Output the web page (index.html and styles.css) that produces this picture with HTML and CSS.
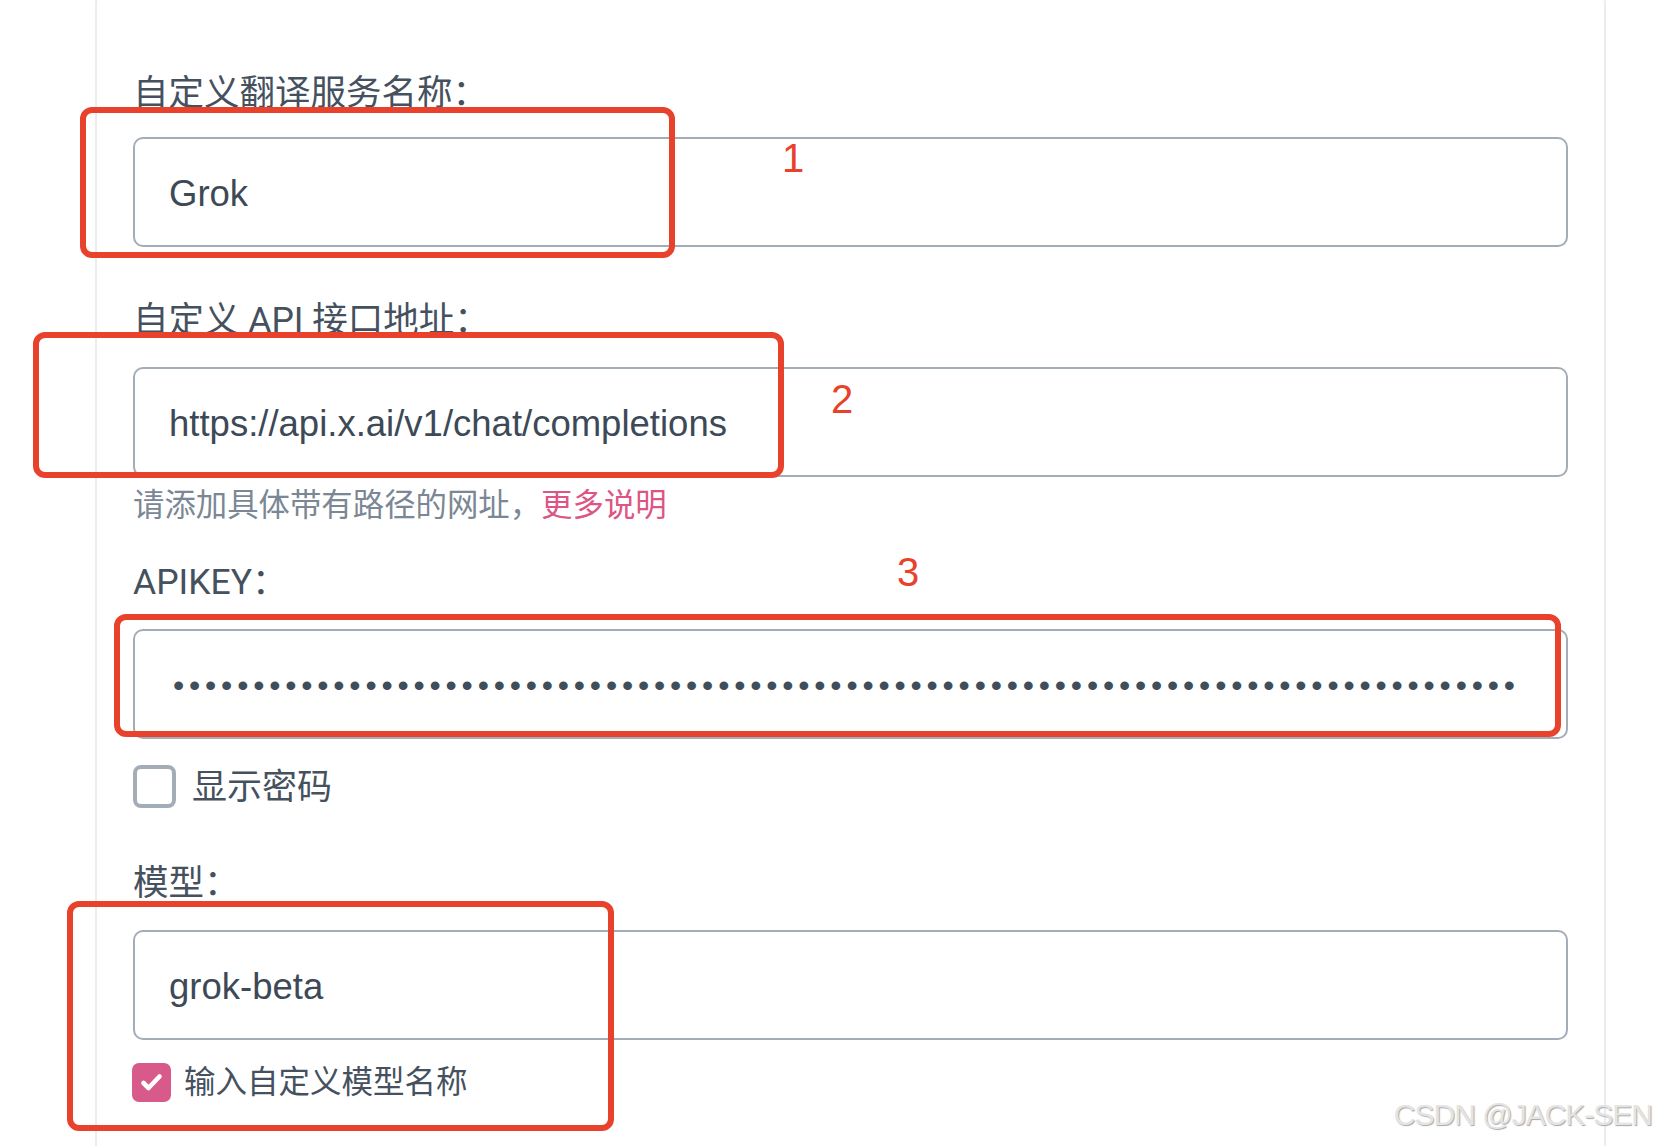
FILE: index.html
```html
<!DOCTYPE html>
<html lang="zh-CN">
<head>
<meta charset="utf-8">
<title>自定义翻译服务</title>
<link rel="stylesheet" href="styles.css">
</head>
<body>
<div class="page">
  <div class="card">
    <div class="field field-first">
      <label class="label">自定义翻译服务名称：</label>
      <input class="text-input" type="text" value="Grok">
    </div>
    <div class="field has-help">
      <label class="label">自定义 API 接口地址：</label>
      <input class="text-input" type="text" value="https://api.x.ai/v1/chat/completions">
      <p class="help">请添加具体带有路径的网址，<a class="link">更多说明</a></p>
    </div>
    <div class="field has-check">
      <label class="label">APIKEY：</label>
      <input class="text-input pw" type="password" value="xxxxxxxxxxxxxxxxxxxxxxxxxxxxxxxxxxxxxxxxxxxxxxxxxxxxxxxxxxxxxxxxxxxxxxxxxxxxxxxxxxxx">
      <label class="check">
        <span class="box"></span>
        <span class="check-text">显示密码</span>
      </label>
    </div>
    <div class="field has-check">
      <label class="label">模型：</label>
      <input class="text-input" type="text" value="grok-beta">
      <label class="check check-sm">
        <span class="box box-on"><svg viewBox="0 0 39 39" width="39" height="39"><path d="M11.5 20 L16.5 25 L27.5 13.5" fill="none" stroke="#fff" stroke-width="4.6" stroke-linecap="round" stroke-linejoin="round"/></svg></span>
        <span class="check-text">输入自定义模型名称</span>
      </label>
    </div>
  </div>

  <div class="mark mark-1"></div>
  <div class="mark mark-2"></div>
  <div class="mark mark-3"></div>
  <div class="mark mark-4"></div>
  <span class="num num-1">1</span>
  <span class="num num-2">2</span>
  <span class="num num-3">3</span>
  <span class="watermark">CSDN @JACK-SEN</span>
</div>
</body>
</html>
```
FILE: styles.css
```css
html, body {
  margin: 0;
  padding: 0;
  background: #ffffff;
}

body {
  font-family: "Liberation Sans", "Noto Sans CJK SC", sans-serif;
  color: #46525f;
}

.page {
  position: relative;
  display: flow-root;
  height: 1146px;
  overflow: hidden;
  padding-left: 95px;
}

.card {
  box-sizing: border-box;
  width: 1511px;
  margin-top: -12px;
  padding: 76px 36px 80px;
  border: 2px solid #ececec;
  border-radius: 16px;
  background: #fff;
  display: flex;
  flex-direction: column;
}

.field {
  display: flex;
  flex-direction: column;
  margin-bottom: 49px;
}

.field.has-help {
  margin-bottom: 31px;
}

.field.has-check {
  margin-bottom: 51px;
}

.label {
  display: block;
  font-family: Roboto, "Noto Sans CJK SC", sans-serif;
  font-size: 35.5px;
  line-height: 49px;
  margin-bottom: 22px;
  color: #45515e;
}

.field-first .label {
  margin-top: 3px;
  margin-bottom: 19px;
}

.text-input {
  box-sizing: border-box;
  width: 100%;
  height: 110px;
  margin: 0;
  padding: 4px 34px 0;
  border: 2px solid #a3adb8;
  border-radius: 10px;
  background: #fff;
  font-family: "Liberation Sans", "Noto Sans CJK SC", sans-serif;
  font-size: 36.5px;
  color: #3d4956;
  outline: none;
}

.text-input.pw {
  font-size: 32px;
  letter-spacing: 4.83px;
  padding: 2px 34px 0 38px;
  color: #404e5c;
}

.help {
  margin: 8px 0 0;
  font-size: 31.4px;
  line-height: 42px;
  color: #7b8794;
}

.link {
  color: #dc5586;
  text-decoration: none;
}

.check {
  display: flex;
  align-items: center;
  gap: 16px;
  margin-top: 26px;
  height: 43px;
}

.check-text {
  font-size: 35px;
  line-height: 43px;
  color: #45515e;
}

.box {
  box-sizing: border-box;
  width: 43px;
  height: 43px;
  border: 4px solid #a3adb8;
  border-radius: 8px;
  background: #fff;
  flex: none;
}

.check-sm {
  margin-top: 23px;
  margin-left: -1px;
  height: 39px;
  gap: 13px;
}

.check-sm .check-text {
  font-size: 31.5px;
  line-height: 39px;
}

.box-on {
  width: 39px;
  height: 39px;
  border: none;
  border-radius: 7px;
  background: #d85a8a;
  display: flex;
}

.mark {
  position: absolute;
  box-sizing: border-box;
  border: 6px solid #e8412c;
  border-radius: 12px;
}

.mark-1 { left: 80px; top: 107px; width: 595px; height: 151px; }
.mark-2 { left: 33px; top: 332px; width: 751px; height: 146px; }
.mark-3 { left: 114px; top: 614px; width: 1447px; height: 123px; }
.mark-4 { left: 67px; top: 901px; width: 547px; height: 230px; }

.num {
  position: absolute;
  font-family: "Liberation Sans", sans-serif;
  font-size: 40px;
  line-height: 40px;
  color: #e8412c;
}

.num-1 { left: 782px; top: 138px; }
.num-2 { left: 831px; top: 379px; }
.num-3 { left: 897px; top: 552px; }

.watermark {
  position: absolute;
  right: 6px;
  top: 1097px;
  font-family: "Liberation Sans", sans-serif;
  font-size: 30px;
  line-height: 36px;
  letter-spacing: -1px;
  color: #e4e4e4;
  text-shadow: 1px 1px 1px #a8a8a8;
}
```
